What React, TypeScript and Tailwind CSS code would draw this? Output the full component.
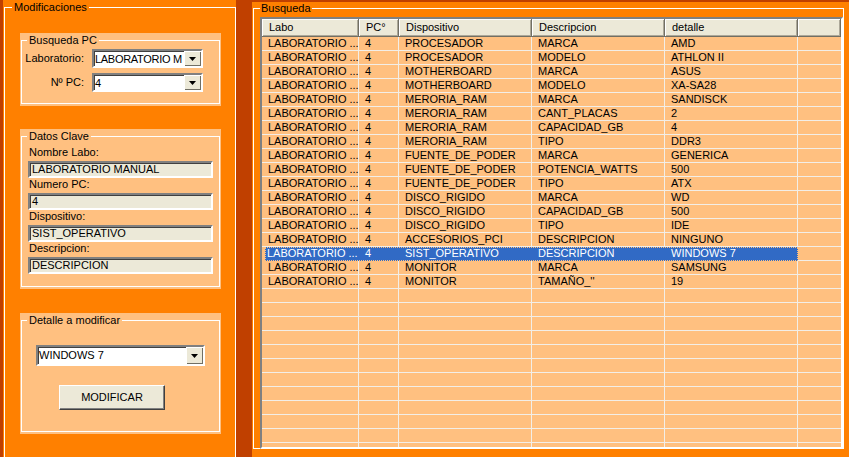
import type { ReactNode } from 'react'

type Row = [string, string, string, string, string]

const rows: Row[] = [
    ['LABORATORIO ...', '4', 'PROCESADOR', 'MARCA', 'AMD'],
    ['LABORATORIO ...', '4', 'PROCESADOR', 'MODELO', 'ATHLON II'],
    ['LABORATORIO ...', '4', 'MOTHERBOARD', 'MARCA', 'ASUS'],
    ['LABORATORIO ...', '4', 'MOTHERBOARD', 'MODELO', 'XA-SA28'],
    ['LABORATORIO ...', '4', 'MERORIA_RAM', 'MARCA', 'SANDISCK'],
    ['LABORATORIO ...', '4', 'MERORIA_RAM', 'CANT_PLACAS', '2'],
    ['LABORATORIO ...', '4', 'MERORIA_RAM', 'CAPACIDAD_GB', '4'],
    ['LABORATORIO ...', '4', 'MERORIA_RAM', 'TIPO', 'DDR3'],
    ['LABORATORIO ...', '4', 'FUENTE_DE_PODER', 'MARCA', 'GENERICA'],
    ['LABORATORIO ...', '4', 'FUENTE_DE_PODER', 'POTENCIA_WATTS', '500'],
    ['LABORATORIO ...', '4', 'FUENTE_DE_PODER', 'TIPO', 'ATX'],
    ['LABORATORIO ...', '4', 'DISCO_RIGIDO', 'MARCA', 'WD'],
    ['LABORATORIO ...', '4', 'DISCO_RIGIDO', 'CAPACIDAD_GB', '500'],
    ['LABORATORIO ...', '4', 'DISCO_RIGIDO', 'TIPO', 'IDE'],
    ['LABORATORIO ...', '4', 'ACCESORIOS_PCI', 'DESCRIPCION', 'NINGUNO'],
    ['LABORATORIO ...', '4', 'SIST_OPERATIVO', 'DESCRIPCION', 'WINDOWS 7'],
    ['LABORATORIO ...', '4', 'MONITOR', 'MARCA', 'SAMSUNG'],
    ['LABORATORIO ...', '4', 'MONITOR', "TAMAÑO_''", '19'],
]

const SELECTED = 15
const TOTAL_ROWS = 30

const colWidths = ['w-[97px]', 'w-[40px]', 'w-[133px]', 'w-[133px]', 'w-[133px]']
const headers = ['Labo', 'PC°', 'Dispositivo', 'Descripcion', 'detalle']

function DropButton() {
    return (
        <div className="w-[17px] h-full bg-[#ECE9D8] shadow-[inset_1px_1px_0_#fff,inset_-1px_-1px_0_#716F64] flex items-center justify-center shrink-0">
            <svg width="7" height="4" viewBox="0 0 7 4">
                <polygon points="0,0 7,0 3.5,4" fill="#000" />
            </svg>
        </div>
    )
}

function Combo({ value, className, textClass = '' }: { value: string; className: string; textClass?: string }) {
    return (
        <div
            className={`flex bg-white border-2 border-t-[#808080] border-l-[#808080] border-b-white border-r-white shadow-[inset_1px_1px_0_#404040] ${className}`}
        >
            <div className={`flex-1 overflow-hidden whitespace-nowrap pl-[1px] pt-[1px] leading-[14px] ${textClass}`}>{value}</div>
            <DropButton />
        </div>
    )
}

function Group({ title, children, className = '' }: { title: string; children: ReactNode; className?: string }) {
    return (
        <div className={`bg-[#FFC080] pt-[1px] px-[1px] pb-[2px] ${className}`}>
            <fieldset className="border border-white">
                <legend className="ml-[5px] px-[2px] leading-[13px]">{title}</legend>
                {children}
            </fieldset>
        </div>
    )
}

function Field({ label, value, first }: { label: string; value: string; first?: boolean }) {
    return (
        <>
            <div className={`ml-[7px] h-[13px] leading-[13px] ${first ? 'mt-[3px]' : ''}`}>{label}</div>
            <div className="ml-[6px] mt-[2px] w-[185px] h-[17px] bg-[#ECE9D8] border-2 border-t-[#808080] border-l-[#808080] border-b-white border-r-white shadow-[inset_1px_1px_0_#404040] pl-[2px] leading-[13px] whitespace-nowrap overflow-hidden">
                {value}
            </div>
        </>
    )
}

function LeftPanel() {
    return (
        <div className="ml-[3px] w-[233px] shrink-0 bg-[#FF8000] pt-[1px]">
            <fieldset className="ml-[1px] h-[470px] border border-white">
                <legend className="ml-[7px] px-[2px] leading-[13px]">Modificaciones</legend>

                {/* Busqueda PC */}
                <Group title="Busqueda PC" className="mt-[19px] ml-[15px] w-[201px]">
                    <div className="pt-[2px] pb-[11px]">
                        <div className="flex items-center h-[19px]">
                            <div className="w-[62px] text-right">Laboratorio:</div>
                            <Combo
                                value="LABORATORIO M"
                                className="ml-[8px] w-[111px] h-[19px]"
                                textClass="tracking-[-0.3px]"
                            />
                        </div>
                        <div className="flex items-center h-[19px] mt-[5px]">
                            <div className="w-[62px] text-right">Nº PC:</div>
                            <Combo value="4" className="ml-[8px] w-[111px] h-[19px]" />
                        </div>
                    </div>
                </Group>

                {/* Datos Clave */}
                <Group title="Datos Clave" className="mt-[23px] ml-[15px] w-[201px]">
                    <div className="pb-[12px]">
                        <Field label="Nombre Labo:" value="LABORATORIO MANUAL" first />
                        <Field label="Numero PC:" value="4" />
                        <Field label="Dispositivo:" value="SIST_OPERATIVO" />
                        <Field label="Descripcion:" value="DESCRIPCION" />
                    </div>
                </Group>

                {/* Detalle a modificar */}
                <Group title="Detalle a modificar" className="mt-[24px] ml-[15px] w-[201px]">
                    <div className="pb-[21px]">
                        <Combo value="WINDOWS 7" className="mt-[18px] ml-[14px] w-[169px] h-[21px]" />
                        <button className="mt-[19px] ml-[37px] w-[106px] h-[25px] bg-[#ECE9D8] border border-t-white border-l-white border-b-[#404040] border-r-[#404040] shadow-[inset_-1px_-1px_0_#808080] text-[11px] leading-[13px] block">
                            MODIFICAR
                        </button>
                    </div>
                </Group>
            </fieldset>
        </div>
    )
}

function DataRow({ row, index }: { row?: Row; index: number }) {
    const selected = index === SELECTED
    if (selected && row) {
        return (
            <div className="flex h-[14px] shrink-0">
                <div className="pl-[3px] flex">
                    <div className="flex bg-[#316AC5] text-white outline outline-1 outline-dotted outline-[#FFC080] -outline-offset-1">
                        {row.map((cell, i) => (
                            <div
                                key={i}
                                className={`${i === 0 ? 'w-[94px] pl-[2px]' : colWidths[i] + ' pl-[6px]'} h-[14px] border-r border-[#316AC5] leading-[13px] whitespace-nowrap overflow-hidden`}
                            >
                                {cell}
                            </div>
                        ))}
                    </div>
                </div>
                <div className="flex-1 h-[14px] border-b border-[#F2EEE8]" />
            </div>
        )
    }
    return (
        <div className="flex h-[14px] shrink-0">
            {colWidths.map((w, i) => (
                <div
                    key={i}
                    className={`${w} h-[14px] border-r border-b border-[#F2EEE8] pl-[6px] leading-[13px] whitespace-nowrap overflow-hidden`}
                >
                    {row ? row[i] : ''}
                </div>
            ))}
            <div className="flex-1 h-[14px] border-b border-[#F2EEE8]" />
        </div>
    )
}

function Grid() {
    return (
        <div className="mt-[2px] ml-[6px] h-[432px] flex flex-col overflow-hidden bg-[#FFC080] border-2 border-t-[#808080] border-l-[#808080] border-b-white border-r-white">
            <div className="flex h-[18px] shrink-0 bg-[#ECE9D8]">
                {headers.map((h, i) => (
                    <div
                        key={h}
                        className={`${colWidths[i]} h-[18px] pl-[7px] leading-[16px] border-r border-b border-[#716F64] shadow-[inset_1px_1px_0_#fff,inset_-1px_-1px_0_#ACA899]`}
                    >
                        {h}
                    </div>
                ))}
                <div className="flex-1 h-[18px] border-r border-b border-[#716F64] shadow-[inset_1px_1px_0_#fff,inset_-1px_-1px_0_#ACA899]" />
            </div>
            {Array.from({ length: TOTAL_ROWS }).map((_, i) => (
                <DataRow key={i} row={rows[i]} index={i} />
            ))}
        </div>
    )
}

function RightPanel() {
    return (
        <div className="ml-[16px] mt-[2px] flex-1 bg-[#FF8000] pl-[1px] pr-[5px]">
            <fieldset className="h-[447px] border border-white">
                <legend className="ml-[6px] px-[1px] leading-[13px]">Busqueda</legend>
                <Grid />
            </fieldset>
        </div>
    )
}

export default function App() {
    return (
        <div className="w-[849px] h-[457px] overflow-hidden flex bg-[#C04000] text-black text-[11px] font-['Liberation_Sans',Arial,sans-serif]">
            <LeftPanel />
            <RightPanel />
        </div>
    )
}
